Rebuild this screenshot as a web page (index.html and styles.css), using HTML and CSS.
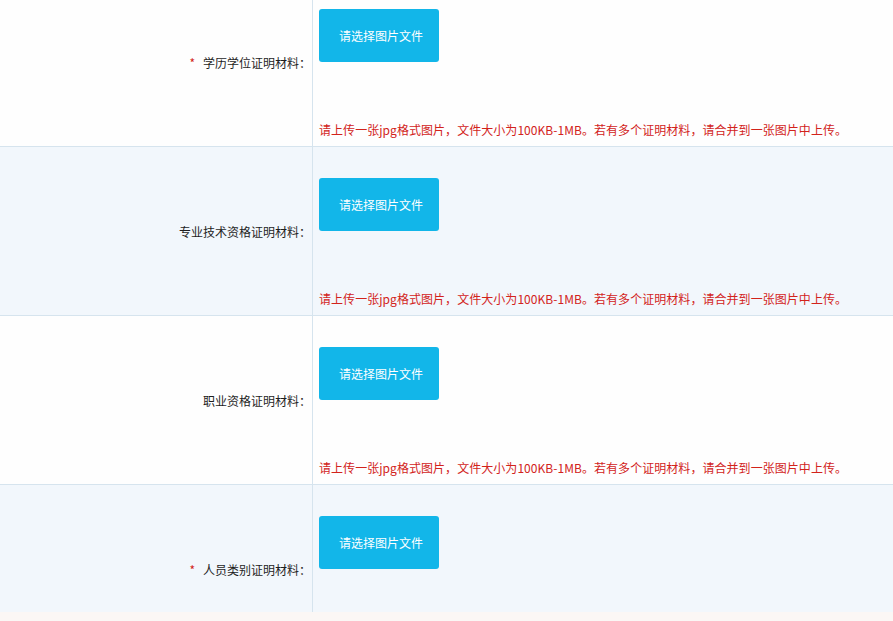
FILE: index.html
```html
<!DOCTYPE html>
<html lang="zh-CN">
<head>
    <meta charset="UTF-8">
    <title>证明材料上传</title>
    <link rel="stylesheet" href="styles.css">
</head>
<body>
    <div class="form-list">
        <div class="form-row">
            <div class="form-label"><span class="required">*</span>学历学位证明材料：</div>
            <div class="form-field">
                <button type="button" class="upload-btn">请选择图片文件</button>
                <div class="hint">请上传一张jpg格式图片，文件大小为100KB-1MB。若有多个证明材料，请合并到一张图片中上传。</div>
            </div>
        </div>
        <div class="form-row alt">
            <div class="form-label">专业技术资格证明材料：</div>
            <div class="form-field">
                <button type="button" class="upload-btn">请选择图片文件</button>
                <div class="hint">请上传一张jpg格式图片，文件大小为100KB-1MB。若有多个证明材料，请合并到一张图片中上传。</div>
            </div>
        </div>
        <div class="form-row">
            <div class="form-label">职业资格证明材料：</div>
            <div class="form-field">
                <button type="button" class="upload-btn">请选择图片文件</button>
                <div class="hint">请上传一张jpg格式图片，文件大小为100KB-1MB。若有多个证明材料，请合并到一张图片中上传。</div>
            </div>
        </div>
        <div class="form-row alt last">
            <div class="form-label"><span class="required">*</span>人员类别证明材料：</div>
            <div class="form-field">
                <button type="button" class="upload-btn">请选择图片文件</button>
            </div>
        </div>
    </div>
</body>
</html>
```

FILE: styles.css
```css
:root {
    --border-color: #d6e4ee;
    --row-bg: #fefefe;
    --row-alt-bg: #f2f7fc;
    --btn-color: #12b6e9;
    --hint-color: #d2231b;
    --text-color: #1e1e1e;
}

body {
    margin: 0;
    background-color: #fbf7f5;
    font-family: "Noto Sans CJK SC", "Microsoft YaHei", sans-serif;
    font-size: 12px;
    color: var(--text-color);
    overflow: hidden;
}

.form-list {
    margin-top: -22px;
}

.form-row {
    display: flex;
    height: 168px;
    background-color: var(--row-bg);
    border-bottom: 1px solid var(--border-color);
}

.form-row.alt {
    background-color: var(--row-alt-bg);
}

.form-row.last {
    height: 127px;
    border-bottom: none;
}

.form-label {
    width: 313px;
    box-sizing: border-box;
    padding: 76px 1px 0 0;
    border-right: 1px solid var(--border-color);
    text-align: right;
    line-height: 18px;
}

.required {
    color: var(--hint-color);
    margin-right: 8px;
}

.form-field {
    flex: 1;
    display: flex;
    flex-direction: column;
    align-items: flex-start;
    padding: 31px 0 0 6px;
}

.upload-btn {
    width: 120px;
    height: 53px;
    padding: 0 0 0 4px;
    background-color: var(--btn-color);
    color: white;
    border: none;
    border-radius: 3px;
    font-family: inherit;
    font-size: 12px;
    cursor: pointer;
}

.hint {
    margin-top: 59px;
    color: var(--hint-color);
    line-height: 18px;
    letter-spacing: 0.05px;
    white-space: nowrap;
}
```
